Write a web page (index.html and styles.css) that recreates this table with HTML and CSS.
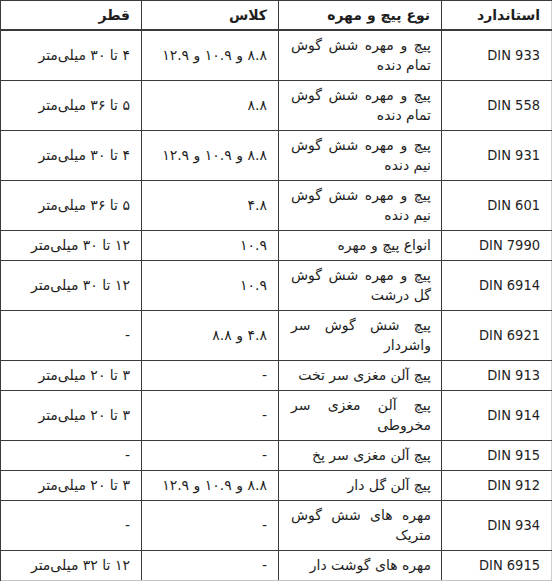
FILE: index.html
```html
<!DOCTYPE html>
<html lang="fa" dir="rtl">
<head>
<meta charset="utf-8">
<title>جدول استاندارد پیچ و مهره</title>
<link rel="stylesheet" href="styles.css">
</head>
<body>
<table class="spec">
<colgroup>
<col class="c-std"><col class="c-type"><col class="c-class"><col class="c-dia">
</colgroup>
<thead>
<tr><th>استاندارد</th><th>نوع پیچ و مهره</th><th>کلاس</th><th>قطر</th></tr>
</thead>
<tbody>
<tr class="r2"><td class="std">DIN 933</td><td class="type">پیچ و مهره شش گوش تمام دنده</td><td>۸.۸ و ۱۰.۹ و ۱۲.۹</td><td>۴ تا ۳۰ میلی‌متر</td></tr>
<tr class="r2"><td class="std">DIN 558</td><td class="type">پیچ و مهره شش گوش تمام دنده</td><td>۸.۸</td><td>۵ تا ۳۶ میلی‌متر</td></tr>
<tr class="r2"><td class="std">DIN 931</td><td class="type">پیچ و مهره شش گوش نیم دنده</td><td>۸.۸ و ۱۰.۹ و ۱۲.۹</td><td>۴ تا ۳۰ میلی‌متر</td></tr>
<tr class="r2"><td class="std">DIN 601</td><td class="type">پیچ و مهره شش گوش نیم دنده</td><td>۴.۸</td><td>۵ تا ۳۶ میلی‌متر</td></tr>
<tr class="r1"><td class="std">DIN 7990</td><td class="type">انواع پیچ و مهره</td><td>۱۰.۹</td><td>۱۲ تا ۳۰ میلی‌متر</td></tr>
<tr class="r2"><td class="std">DIN 6914</td><td class="type">پیچ و مهره شش گوش گل درشت</td><td>۱۰.۹</td><td>۱۲ تا ۳۰ میلی‌متر</td></tr>
<tr class="r2"><td class="std">DIN 6921</td><td class="type">پیچ شش گوش سر واشردار</td><td>۴.۸ و ۸.۸</td><td>-</td></tr>
<tr class="r1"><td class="std">DIN 913</td><td class="type">پیچ آلن مغزی سر تخت</td><td>-</td><td>۳ تا ۲۰ میلی‌متر</td></tr>
<tr class="r2"><td class="std">DIN 914</td><td class="type">پیچ آلن مغزی سر مخروطی</td><td>-</td><td>۳ تا ۲۰ میلی‌متر</td></tr>
<tr class="r1"><td class="std">DIN 915</td><td class="type">پیچ آلن مغزی سر پخ</td><td>-</td><td>-</td></tr>
<tr class="r1"><td class="std">DIN 912</td><td class="type">پیچ آلن گل دار</td><td>۸.۸ و ۱۰.۹ و ۱۲.۹</td><td>۳ تا ۲۰ میلی‌متر</td></tr>
<tr class="r2"><td class="std">DIN 934</td><td class="type">مهره های شش گوش متریک</td><td>-</td><td>-</td></tr>
<tr class="r1"><td class="std">DIN 6915</td><td class="type">مهره های گوشت دار</td><td>-</td><td>۱۲ تا ۳۲ میلی‌متر</td></tr>
</tbody>
</table>
</body>
</html>
```
FILE: styles.css
```css
html, body {
  margin: 0;
  padding: 0;
  background: #ffffff;
}
.spec {
  width: 552px;
  table-layout: fixed;
  border-collapse: collapse;
  font-family: "DejaVu Sans", sans-serif;
  font-size: 14px;
  color: #1e1e1e;
  border-top: 1px solid #b8b8b8;
  border-bottom: 1px solid #c4c4c4;
}
.c-std { width: 110px; }
.c-type { width: 163px; }
.c-class { width: 137px; }
.c-dia { width: 142px; }
.spec th, .spec td {
  border: 1px solid #3a3a3a;
  text-align: right;
  vertical-align: middle;
  line-height: 20px;
  padding: 4px 11px 5px 11px;
}
.spec th {
  font-weight: bold;
  height: 19px;
  padding-top: 4px;
  padding-bottom: 4px;
  border-bottom: 2px solid #3a3a3a;
}
.spec tr > *:first-child { border-right: 1px solid #d0d0d0; }
.spec tr > *:last-child { border-left: 2px solid #3a3a3a; }
.spec tbody tr:last-child td { border-bottom: 1px solid #c4c4c4; }
.spec .r1 td { height: 20px; }
.spec .r2 td { height: 40px; }
.spec .type {
  text-align: justify;
  padding-left: 12px;
  padding-right: 10px;
}
.spec .std {
  direction: ltr;
  text-align: right;
  font-family: "DejaVu Sans Condensed", "DejaVu Sans", sans-serif;
  font-size: 14.5px;
}
```
